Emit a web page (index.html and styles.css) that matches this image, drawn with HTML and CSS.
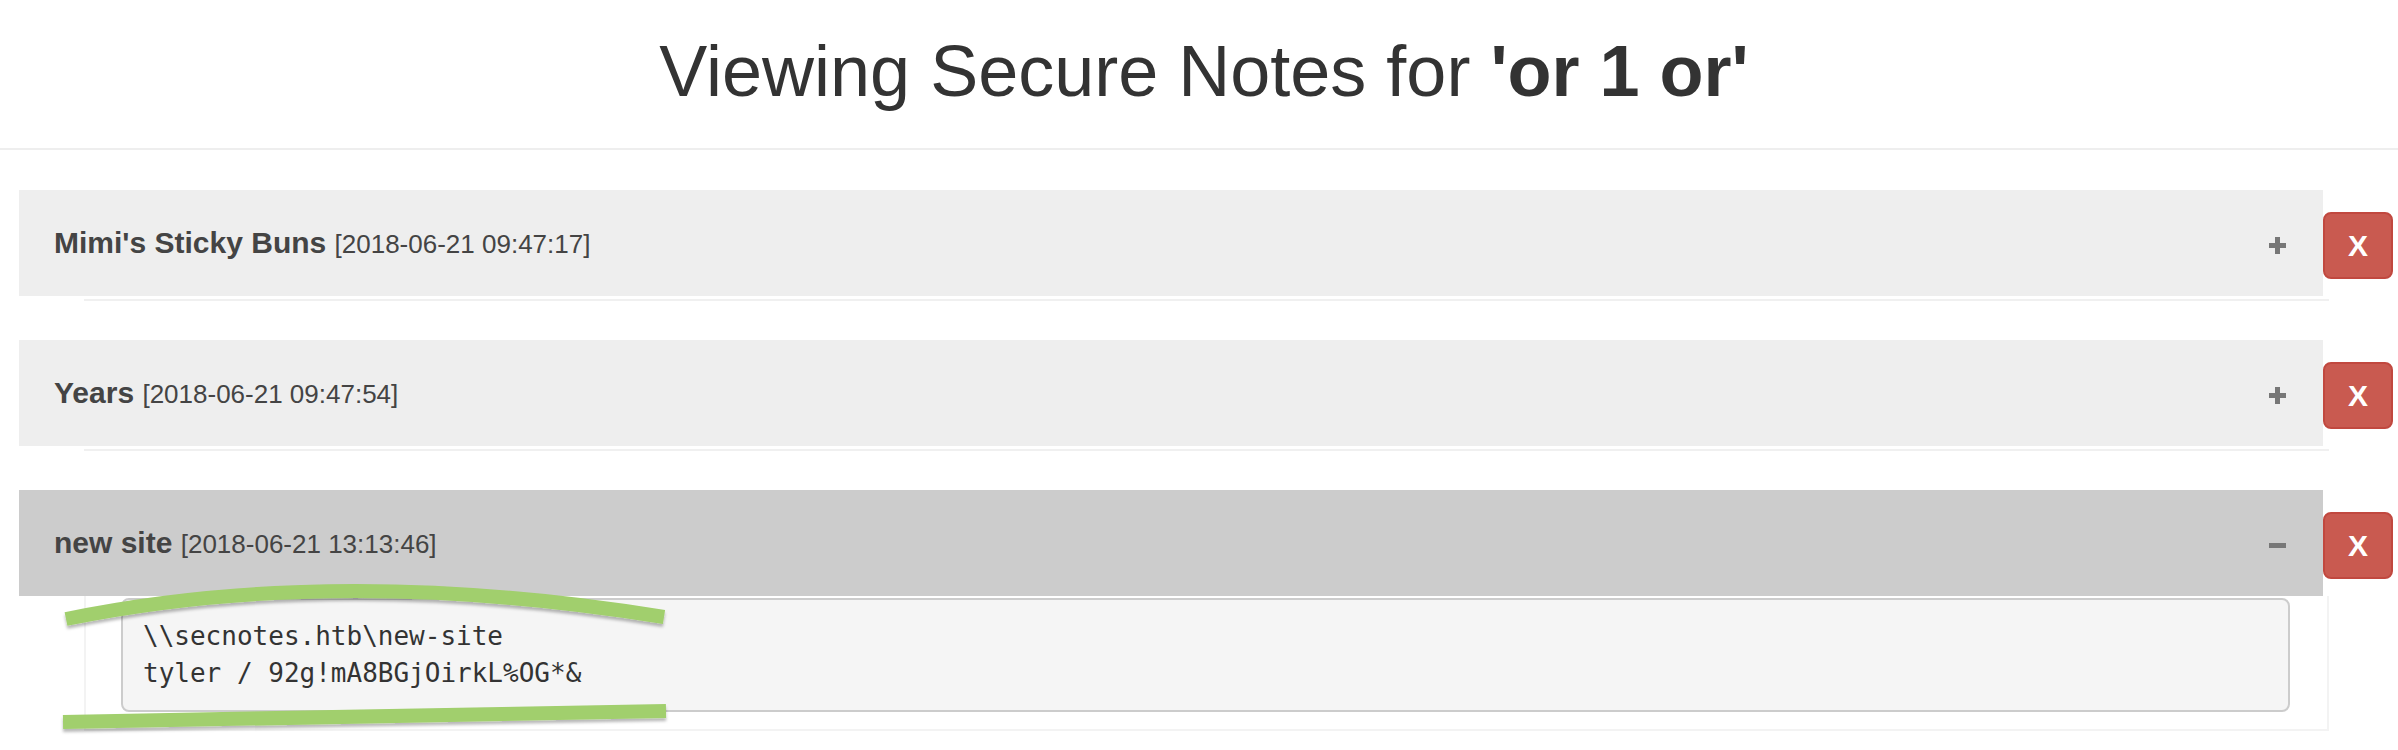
FILE: index.html
```html
<!DOCTYPE html>
<html lang="en">
<head>
<meta charset="utf-8">
<title>Secure Notes</title>
<link rel="stylesheet" href="styles.css">
</head>
<body>
<header class="page-header">
  <h1 class="page-title">Viewing Secure Notes for <strong>'or 1 or'</strong></h1>
</header>
<main class="notes">
  <section class="note">
    <div class="note-row">
      <div class="note-head">
        <h4 class="note-title">Mimi's Sticky Buns <span class="note-date">[2018-06-21 09:47:17]</span></h4>
        <span class="toggle plus"></span>
      </div>
      <button class="btn-delete" type="button">X</button>
    </div>
    <div class="note-body collapsed"></div>
  </section>
  <section class="note">
    <div class="note-row">
      <div class="note-head">
        <h4 class="note-title">Years <span class="note-date">[2018-06-21 09:47:54]</span></h4>
        <span class="toggle plus"></span>
      </div>
      <button class="btn-delete" type="button">X</button>
    </div>
    <div class="note-body collapsed"></div>
  </section>
  <section class="note open">
    <div class="note-row">
      <div class="note-head">
        <h4 class="note-title">new site <span class="note-date">[2018-06-21 13:13:46]</span></h4>
        <span class="toggle minus"></span>
      </div>
      <button class="btn-delete" type="button">X</button>
    </div>
    <div class="note-body expanded">
<pre class="note-pre">\\secnotes.htb\new-site
tyler / 92g!mA8BGjOirkL%OG*&amp;</pre>
    </div>
  </section>
</main>
<svg class="ink" width="2398" height="750" viewBox="0 0 2398 750" aria-hidden="true">
  <defs>
    <filter id="inkshadow" x="-5%" y="-50%" width="110%" height="200%">
      <feDropShadow dx="0" dy="3" stdDeviation="1.6" flood-color="#000" flood-opacity="0.28"/>
    </filter>
  </defs>
  <g fill="none" stroke="#a1cf6d" stroke-width="14" stroke-linecap="butt" filter="url(#inkshadow)">
    <path d="M66 619 Q335 564 664 617"/>
    <path d="M63 722 L666 711"/>
  </g>
</svg>
</body>
</html>
```

FILE: styles.css
```css
html, body {
  margin: 0;
  padding: 0;
}

body {
  position: relative;
  width: 2398px;
  min-height: 750px;
  background: #fff;
  color: #333;
  font-family: "Liberation Sans", Arial, Helvetica, sans-serif;
}

.page-header {
  padding: 31px 0 37px 10px;
  border-bottom: 2px solid #eee;
  text-align: center;
}

.page-title {
  margin: 0;
  font-size: 72px;
  line-height: 80px;
  font-weight: 400;
  color: #333;
}

.page-title strong {
  font-weight: 700;
}

.notes {
  padding: 40px 5px 0 19px;
}

.note-row {
  display: flex;
  align-items: flex-start;
}

.note-head {
  flex: 1;
  display: flex;
  align-items: center;
  height: 106px;
  box-sizing: border-box;
  padding: 0 37px 0 35px;
  background: #eee;
}

.note.open .note-head {
  background: #ccc;
}

.note-title {
  flex: 1;
  margin: 0;
  font-size: 30px;
  line-height: 40px;
  font-weight: 700;
  color: #444;
}

.note-date {
  font-size: 26px;
  font-weight: 400;
  line-height: 1;
}

.toggle {
  position: relative;
  width: 17px;
  height: 17px;
  margin-top: 5px;
}

.toggle::before {
  content: "";
  position: absolute;
  left: 0;
  top: 6px;
  width: 17px;
  height: 5px;
  background: #777;
}

.toggle.plus::after {
  content: "";
  position: absolute;
  left: 6px;
  top: 0;
  width: 5px;
  height: 17px;
  background: #777;
}

.btn-delete {
  margin-top: 22px;
  width: 70px;
  height: 67px;
  padding: 0;
  border: 2px solid #c1483f;
  border-radius: 8px;
  background: #c95a50;
  color: #fff;
  font-family: "Liberation Sans", Arial, Helvetica, sans-serif;
  font-size: 30px;
  font-weight: 700;
  line-height: 1;
}

.note-body {
  margin: 0 64px 0 65px;
}

.note-body.collapsed {
  height: 3px;
  border-bottom: 2px solid #f0f0f0;
  margin-bottom: 39px;
}

.note-body.expanded {
  border: 2px solid #f3f3f3;
  border-top: 0;
  padding: 2px 37px 17px 35px;
}

.note-pre {
  margin: 0;
  padding: 18px 20px;
  background: #f5f5f5;
  border: 2px solid #ccc;
  border-radius: 8px;
  font-family: "DejaVu Sans Mono", "Liberation Mono", monospace;
  font-size: 26px;
  line-height: 37px;
  color: #333;
  white-space: pre;
}

.ink {
  position: absolute;
  left: 0;
  top: 0;
  pointer-events: none;
}
```
